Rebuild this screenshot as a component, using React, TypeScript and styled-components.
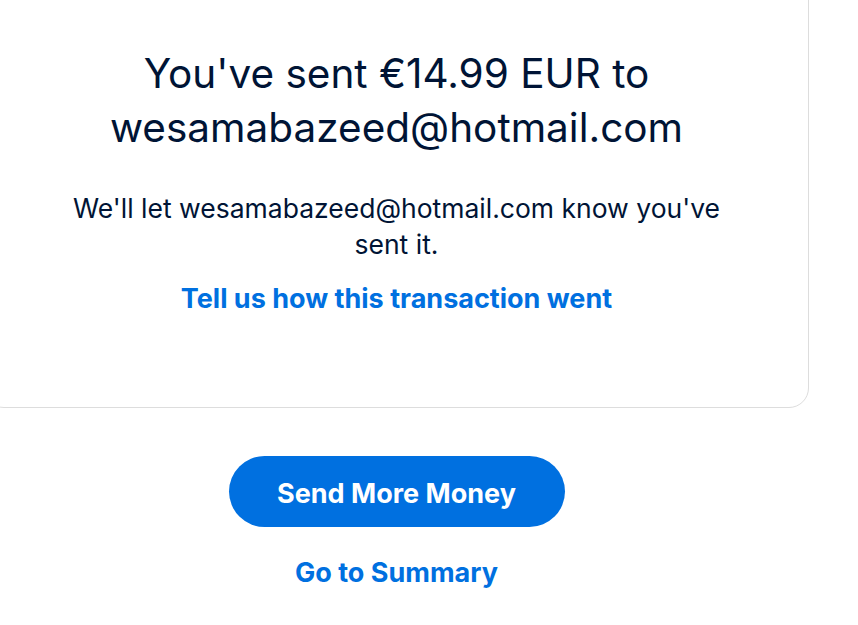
import React from "react";
import styled, { createGlobalStyle } from "styled-components";

const GlobalStyle = createGlobalStyle`
  html, body {
    margin: 0;
    padding: 0;
    background: #ffffff;
  }
  body {
    font-family: "Inter", "Noto Sans", "Liberation Sans", sans-serif;
    color: #001435;
    overflow: hidden;
  }
`;

const Page = styled.div`
  width: 825px;
  margin: -24px 0 0 -16px;
  display: flex;
  flex-direction: column;
  align-items: center;
`;

const Card = styled.section`
  box-sizing: border-box;
  width: 100%;
  padding: 70px 40px 90px;
  border: 1px solid #dddddd;
  border-radius: 20px;
  background: #ffffff;
  display: flex;
  flex-direction: column;
  align-items: center;
  text-align: center;
`;

const Heading = styled.h1`
  margin: 0;
  max-width: 640px;
  font-size: 40.5px;
  line-height: 54px;
  font-weight: 400;
  color: #001435;
`;

const Message = styled.p`
  margin: 35px 0 0;
  max-width: 680px;
  font-size: 26.5px;
  line-height: 36px;
  font-weight: 400;
  color: #001435;
`;

const TextLink = styled.a<{ $top?: number }>`
  display: block;
  margin-top: ${(p) => p.$top ?? 0}px;
  font-size: 27px;
  line-height: 36px;
  font-weight: 700;
  color: #0070e0;
  text-decoration: none;
  cursor: pointer;
`;

const Actions = styled.div`
  display: flex;
  flex-direction: column;
  align-items: center;
  padding-top: 48px;
`;

const PrimaryButton = styled.button`
  width: 336px;
  height: 71px;
  padding: 4px 0 0;
  border: none;
  border-radius: 36px;
  background: #0070e0;
  color: #ffffff;
  font-family: inherit;
  font-size: 27px;
  font-weight: 700;
  cursor: pointer;
`;

export default function App() {
  return (
    <>
      <GlobalStyle />
      <Page>
        <Card>
          <Heading>You've sent €14.99 EUR to wesamabazeed@hotmail.com</Heading>
          <Message>We'll let wesamabazeed@hotmail.com know you've sent it.</Message>
          <TextLink $top={19}>Tell us how this transaction went</TextLink>
        </Card>
        <Actions>
          <PrimaryButton>Send More Money</PrimaryButton>
          <TextLink $top={28}>Go to Summary</TextLink>
        </Actions>
      </Page>
    </>
  );
}
